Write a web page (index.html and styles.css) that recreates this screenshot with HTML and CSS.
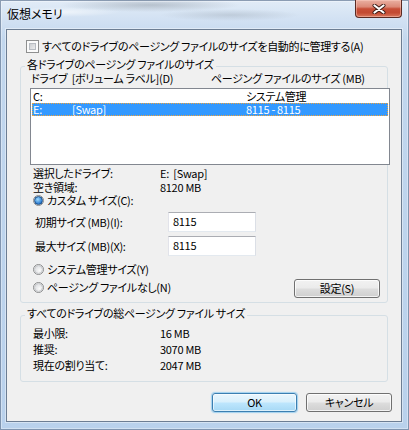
FILE: index.html
```html
<!DOCTYPE html>
<html lang="ja">
<head>
<meta charset="utf-8">
<title>仮想メモリ</title>
<link rel="stylesheet" href="styles.css">
</head>
<body>
<div class="window">
  <div class="titlebar">
    <span class="title">仮想メモリ</span>
    <div class="close">
      <svg width="14" height="10" viewBox="0 0 14 10">
        <path d="M2.5 1.5 L11.5 8.5 M11.5 1.5 L2.5 8.5" stroke="#3b1a14" stroke-width="4" stroke-linecap="round" fill="none"/>
        <path d="M2.5 1.5 L11.5 8.5 M11.5 1.5 L2.5 8.5" stroke="#ffffff" stroke-width="2.2" stroke-linecap="round" fill="none"/>
      </svg>
    </div>
  </div>
  <div class="client">
    <div class="check-row"><span class="checkbox"></span><span>すべてのドライブのページング ファイルのサイズを自動的に管理する(A)</span></div>

    <fieldset class="group group-drives">
      <legend>各ドライブのページング ファイルのサイズ</legend>
      <div class="list-head"><span class="h1">ドライブ  [ボリューム ラベル](D)</span><span class="h2">ページング ファイルのサイズ (MB)</span></div>
      <div class="listbox">
        <div class="row"><span class="c1">C:</span><span class="c2"></span><span class="c3">システム管理</span></div>
        <div class="row selected"><span class="c1">E:</span><span class="c2">[Swap]</span><span class="c3">8115 - 8115</span></div>
      </div>
      <div class="info">
        <div class="kv"><span class="k">選択したドライブ:</span><span class="v">E:  [Swap]</span></div>
        <div class="kv"><span class="k">空き領域:</span><span class="v">8120 MB</span></div>
      </div>
      <div class="radio-row custom"><span class="radio on"></span><span>カスタム サイズ(C):</span></div>
      <div class="field-row first"><span class="flabel">初期サイズ (MB)(I):</span><span class="input">8115</span></div>
      <div class="field-row second"><span class="flabel">最大サイズ (MB)(X):</span><span class="input">8115</span></div>
      <div class="bottom-row">
        <div class="radios">
          <div class="radio-row"><span class="radio"></span><span>システム管理サイズ(Y)</span></div>
          <div class="radio-row"><span class="radio"></span><span>ページング ファイルなし(N)</span></div>
        </div>
        <button class="btn btn-set">設定(S)</button>
      </div>
    </fieldset>

    <fieldset class="group group-total">
      <legend>すべてのドライブの総ページング ファイル サイズ</legend>
      <div class="totals">
        <div class="kv"><span class="k">最小限:</span><span class="v">16 MB</span></div>
        <div class="kv"><span class="k">推奨:</span><span class="v">3070 MB</span></div>
        <div class="kv"><span class="k">現在の割り当て:</span><span class="v">2047 MB</span></div>
      </div>
    </fieldset>

    <div class="buttons">
      <button class="btn btn-default">OK</button>
      <button class="btn">キャンセル</button>
    </div>
  </div>
</div>
</body>
</html>
```

FILE: styles.css
```css
* { box-sizing: border-box; }
html, body { margin: 0; padding: 0; }
body {
  width: 409px;
  height: 430px;
  overflow: hidden;
  font-family: "Noto Sans CJK JP", "Noto Sans", sans-serif;
  font-size: 11px;
  letter-spacing: -0.3px;
  line-height: 13px;
  color: #000;
  white-space: nowrap;
  font-feature-settings: "palt";
  background: #bcd3ec;
}

.window {
  width: 409px;
  height: 430px;
  display: flex;
  flex-direction: column;
  padding: 0 7px 8px 6px;
  background:
    radial-gradient(ellipse 90px 7px at 150px 5px, rgba(110, 120, 130, 0.35), rgba(110, 120, 130, 0)),
    radial-gradient(ellipse 70px 6px at 230px 15px, rgba(110, 120, 130, 0.22), rgba(110, 120, 130, 0)),
    radial-gradient(ellipse 60px 5px at 60px 12px, rgba(255, 255, 255, 0.6), rgba(255, 255, 255, 0)),
    linear-gradient(180deg, #e2ecf7 0px, #d3e2f3 18px, #c2d7ee 40px, #b9d1ec 100%);
  box-shadow: inset 0 0 0 1px rgba(60, 85, 120, 0.55), inset 0 0 0 2px rgba(255, 255, 255, 0.35);
}

.titlebar {
  height: 29px;
  flex: none;
  display: flex;
  justify-content: space-between;
  align-items: flex-start;
  padding-left: 1px;
}
.title {
  margin-top: 7px;
  font-size: 12px;
  letter-spacing: 0;
  line-height: 13px;
}
.close {
  width: 47px;
  height: 18px;
  display: flex;
  align-items: center;
  justify-content: center;
  border: 1px solid #5a2a22;
  border-top: none;
  border-radius: 0 0 4px 4px;
  background: linear-gradient(180deg, #eab0a2 0%, #dc8a78 40%, #c74e37 52%, #c34a32 75%, #d9775c 100%);
  box-shadow: inset 0 0 0 1px rgba(255, 210, 200, 0.45);
}
.close svg { display: block; margin-top: 1px; }

.client {
  flex: 1;
  display: flex;
  flex-direction: column;
  background: #f0f0f0;
  border: 1px solid #6c7d93;
  padding: 10px 13px 0;
  box-shadow: 0 0 0 1px rgba(255, 255, 255, 0.4);
}

.check-row {
  display: flex;
  align-items: center;
  gap: 3px;
  height: 13px;
  padding-left: 6px;
}
.checkbox {
  flex: none;
  width: 13px;
  height: 13px;
  border: 1px solid #8e8f8f;
  padding: 2px;
  background: linear-gradient(135deg, #c7cace, #f2f2f2) content-box, #fbfbfb;
  box-shadow: inset 0 0 0 2px #fbfbfb, inset 0 0 0 3px #b8bcc2;
}

.group {
  margin: 5px 0 0;
  padding: 0;
  min-width: 0;
  border: 1px solid #d5dfe5;
  border-radius: 3px;
}
.group legend {
  margin-left: 4px;
  padding: 0 2px 4px;
  line-height: 13px;
}

.list-head {
  display: flex;
  margin-top: -3px;
  padding-left: 10px;
  white-space: pre;
}
.list-head .h1 { width: 180px; }

.listbox {
  margin: 3px -3px 0 9px;
  height: 77px;
  border: 1px solid #828790;
  background: #fff;
  padding: 1px;
}
.row {
  display: flex;
  height: 13px;
  line-height: 13px;
  padding-left: 1px;
}
.row .c1 { width: 39px; }
.row .c2 { width: 174px; }
.row.selected {
  background: #3399ff;
  color: #fff;
  outline: 1px dotted #f0a33a;
  outline-offset: -1px;
}

.info {
  margin-top: 1px;
  padding-left: 12px;
}
.kv {
  display: flex;
  line-height: 14px;
  white-space: pre;
}
.kv .k { width: 127px; }

.radio-row {
  display: flex;
  align-items: center;
  gap: 3px;
  height: 14px;
  padding-left: 12px;
}
.radio-row.custom { margin-top: -1px; }
.radio {
  flex: none;
  width: 11px;
  height: 11px;
  border-radius: 50%;
  border: 1px solid #8b8c8d;
  background: #f6f6f6;
  display: flex;
  align-items: center;
  justify-content: center;
}
.radio::after {
  content: "";
  width: 7px;
  height: 7px;
  border-radius: 50%;
  border: 1px solid #c3c5c8;
  background: radial-gradient(circle at 65% 65%, #fafafa, #d4d6d9);
}
.radio.on::after {
  border-color: #1c4f86;
  background: radial-gradient(circle at 40% 35%, #9fdcff, #2a7ad0 70%, #17539c);
}

.field-row {
  display: flex;
  align-items: center;
  padding-left: 14px;
}
.field-row.first { margin-top: 5px; }
.field-row.second { margin-top: 4px; }
.flabel { width: 133px; }
.input {
  width: 88px;
  height: 20px;
  border: 1px solid;
  border-color: #abadb3 #dbdfe6 #e3e9ef #e2e3ea;
  background: #fff;
  padding: 2px 0 0 4px;
  line-height: 13px;
}

.bottom-row {
  display: flex;
  justify-content: space-between;
  align-items: flex-start;
  margin-top: 6px;
  padding-right: 7px;
  padding-bottom: 4px;
}
.radios {
  display: flex;
  flex-direction: column;
  gap: 4px;
}

.btn {
  height: 19px;
  border: 1px solid #707070;
  border-radius: 3px;
  padding: 0;
  font: inherit;
  letter-spacing: inherit;
  font-feature-settings: "palt";
  line-height: 15px;
  color: #000;
  background: linear-gradient(180deg, #f2f2f2 0%, #ebebeb 48%, #dddddd 52%, #cfcfcf 100%);
  box-shadow: inset 0 0 0 1px rgba(255, 255, 255, 0.75);
}
.btn-set {
  width: 86px;
  margin-top: 17px;
}

.group-total { margin-top: 4px; }
.totals {
  padding: 1px 0 8px 12px;
}
.totals .kv { line-height: 16px; }

.buttons {
  display: flex;
  justify-content: flex-end;
  gap: 9px;
  margin: 11px -4px 0 0;
}
.buttons .btn { width: 86px; }
.buttons .btn-default {
  width: 85px;
  border-color: #3c7fb1;
  background: linear-gradient(180deg, #eaf6fd 0%, #d9f0fc 48%, #bee6fd 52%, #a7d9f5 100%);
  box-shadow: inset 0 0 0 1px rgba(255, 255, 255, 0.6), 0 0 1px 1px rgba(110, 190, 240, 0.6);
}
```
